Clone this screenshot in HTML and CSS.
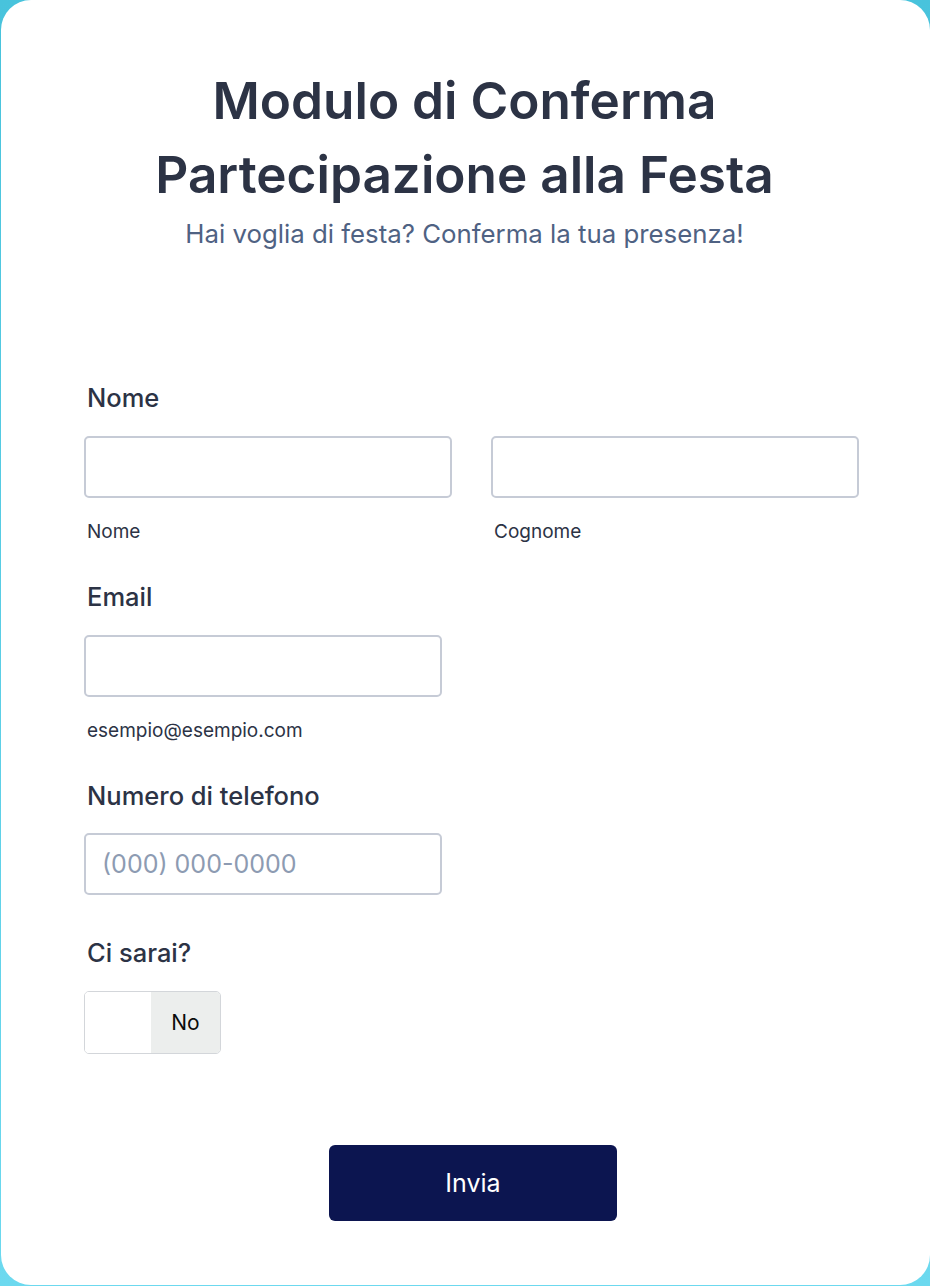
FILE: index.html
```html
<!DOCTYPE html>
<html lang="it">
<head>
<meta charset="utf-8">
<title>Modulo di Conferma Partecipazione alla Festa</title>
<link rel="stylesheet" href="styles.css">
</head>
<body>
<main class="card">
  <header class="header">
    <h1 class="title">Modulo di Conferma<br>Partecipazione alla Festa</h1>
    <p class="subtitle">Hai voglia di festa? Conferma la tua presenza!</p>
  </header>
  <form class="form">
    <div class="field">
      <label class="label">Nome</label>
      <div class="row">
        <div class="col">
          <input class="input" type="text">
          <span class="sublabel">Nome</span>
        </div>
        <div class="col">
          <input class="input" type="text">
          <span class="sublabel">Cognome</span>
        </div>
      </div>
    </div>
    <div class="field">
      <label class="label">Email</label>
      <div class="col narrow">
        <input class="input" type="email">
        <span class="sublabel">esempio@esempio.com</span>
      </div>
    </div>
    <div class="field">
      <label class="label">Numero di telefono</label>
      <div class="col narrow">
        <input class="input phone" type="tel" placeholder="(000) 000-0000">
      </div>
    </div>
    <div class="field">
      <label class="label">Ci sarai?</label>
      <div class="toggle">
        <span class="toggle-knob"></span>
        <span class="toggle-text">No</span>
      </div>
    </div>
    <div class="actions">
      <button class="submit" type="button">Invia</button>
    </div>
  </form>
</main>
</body>
</html>
```
FILE: styles.css
```css
html, body {
  margin: 0;
  padding: 0;
}
body {
  width: 930px;
  height: 1286px;
  background: linear-gradient(180deg, #48c3dc 0%, #6cd9ef 100%);
  font-family: Inter, "Noto Sans", "Liberation Sans", sans-serif;
  overflow: hidden;
}
.card {
  box-sizing: border-box;
  margin-left: 1px;
  width: 929px;
  height: 1285px;
  background: #ffffff;
  border-radius: 30px;
  padding-top: 63px;
}
.header {
  text-align: center;
  padding-right: 2px;
}
.title {
  margin: 0;
  font-size: 51.3px;
  line-height: 74px;
  font-weight: 600;
  color: #2c3345;
}
.subtitle {
  margin: 7px 0 0;
  font-size: 25.8px;
  line-height: 32px;
  color: #4f6283;
}
.form {
  margin: 132px 0 0 83px;
  width: 775px;
  display: flex;
  flex-direction: column;
  gap: 39px;
}
.field {
  display: flex;
  flex-direction: column;
  gap: 22px;
}
.label {
  font-size: 25.5px;
  line-height: 32px;
  font-weight: 500;
  color: #2c3345;
  padding-left: 3px;
}
.row {
  display: flex;
  gap: 39px;
}
.col {
  display: flex;
  flex-direction: column;
  gap: 21px;
  width: 368px;
}
.col.narrow {
  width: 358px;
}
.input {
  box-sizing: border-box;
  width: 100%;
  height: 62px;
  border: 2px solid #c6cbd6;
  border-radius: 5px;
  background: #ffffff;
  font-family: inherit;
  font-size: 25px;
  padding: 0 16px;
  color: #2c3345;
  outline: none;
}
.input::placeholder {
  color: #8d9bb2;
}
.sublabel {
  font-size: 19px;
  line-height: 26px;
  color: #2c3345;
  padding-left: 3px;
  margin-bottom: -3px;
}
.field:nth-child(3) {
  gap: 21px;
}
.field:nth-child(4) {
  margin-top: 3px;
  gap: 22px;
}
.toggle {
  box-sizing: border-box;
  width: 137px;
  height: 63px;
  border: 1.5px solid #d3d6da;
  border-radius: 5px;
  display: flex;
  overflow: hidden;
}
.toggle-knob {
  width: 66px;
  background: #ffffff;
}
.toggle-text {
  flex: 1;
  background: #eceeed;
  display: flex;
  align-items: center;
  justify-content: center;
  font-size: 21px;
  color: #0b0b0b;
}
.actions {
  margin-top: 52px;
  display: flex;
  justify-content: center;
  padding-left: 3px;
}
.submit {
  width: 288px;
  height: 76px;
  border: none;
  border-radius: 6px;
  background: #0c1550;
  color: #ffffff;
  font-family: inherit;
  font-size: 25px;
  font-weight: 400;
}
```
